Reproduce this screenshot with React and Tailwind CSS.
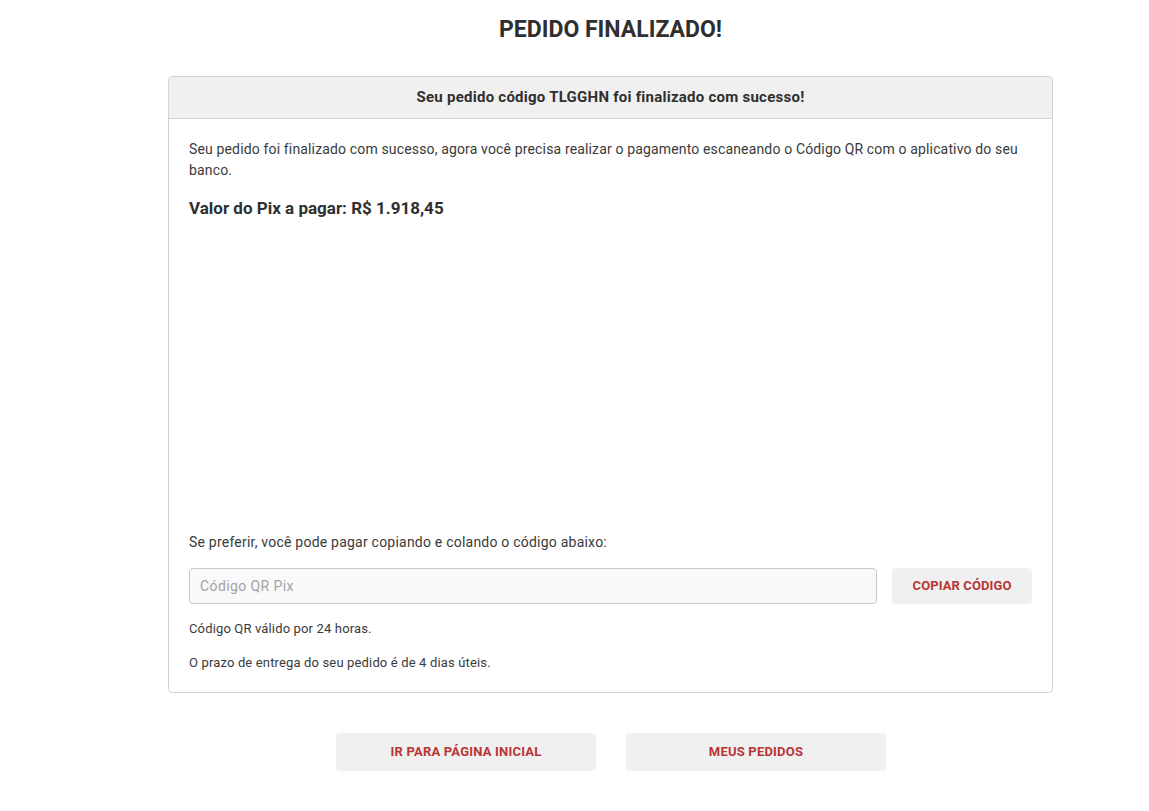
import React from "react";

const font = { fontFamily: "Roboto, 'Liberation Sans', sans-serif" };

const PedidoFinalizado = () => {
  const valor = "R$ 1.918,45";
  const codigo = "TLGGHN";

  return (
    <div className="min-h-screen bg-white text-[#333]" style={font}>
      <div className="ml-[168px] w-[885px] pt-[15px] pb-10">
        {/* Title */}
        <h1 className="text-center text-[23px] leading-[30px] font-bold text-[#2f2f2f]">
          PEDIDO FINALIZADO!
        </h1>

        {/* Card */}
        <section className="mt-[31px] rounded-[4px] border border-[#d4d4d4] overflow-hidden">
          <div className="h-[42px] flex items-center justify-center bg-[#f0f0f0] border-b border-[#d4d4d4]">
            <h3 className="text-[15px] font-bold text-[#2f2f2f] tracking-[0.25px]">
              Seu pedido código {codigo} foi finalizado com sucesso!
            </h3>
          </div>

          <div className="px-5 pt-5 pb-[19px]">
            <p className="text-[14px] leading-[21px] text-[#3a3a3a] tracking-[0.15px] pr-2">
              Seu pedido foi finalizado com sucesso, agora você precisa realizar o pagamento escaneando o Código QR com o aplicativo do seu banco.
            </p>
            <p className="mt-[15px] text-[17px] leading-[24px] font-bold text-[#2f2f2f]">
              Valor do Pix a pagar: {valor}
            </p>

            {/* QR code placeholder (image not loaded) */}
            <div className="h-[312px]" />

            <p className="text-[14px] leading-[20px] text-[#3a3a3a] tracking-[0.22px]">
              Se preferir, você pode pagar copiando e colando o código abaixo:
            </p>

            <div className="mt-[16px] flex items-center gap-[15px]">
              <input
                readOnly
                placeholder="Código QR Pix"
                className="flex-1 h-[36px] rounded-[4px] border border-[#c9c9c9] bg-[#f9f9f9] px-[10px] text-[14px] tracking-[0.4px] placeholder:text-[#a3a3a3] outline-none"
                style={font}
              />
              <button className="w-[140px] h-[36px] rounded-[4px] bg-[#f0f0f0] text-[13px] font-bold text-[#b83535] tracking-[0.1px]">
                COPIAR CÓDIGO
              </button>
            </div>

            <p className="mt-[15px] text-[13px] leading-[20px] text-[#3a3a3a] tracking-[0.15px]">
              Código QR válido por 24 horas.
            </p>
            <p className="mt-[14px] text-[13px] leading-[20px] text-[#3a3a3a] tracking-[0.15px]">
              O prazo de entrega do seu pedido é de 4 dias úteis.
            </p>
          </div>
        </section>

        {/* Actions */}
        <div className="mt-[40px] flex justify-center gap-[30px] pl-[1px]">
          <button className="w-[260px] h-[38px] rounded-[4px] bg-[#f0f0f0] text-[13px] font-bold text-[#b83535] tracking-[0.2px]">
            IR PARA PÁGINA INICIAL
          </button>
          <button className="w-[260px] h-[38px] rounded-[4px] bg-[#f0f0f0] text-[13px] font-bold text-[#b83535] tracking-[0.2px]">
            MEUS PEDIDOS
          </button>
        </div>
      </div>
    </div>
  );
};

export default PedidoFinalizado;
